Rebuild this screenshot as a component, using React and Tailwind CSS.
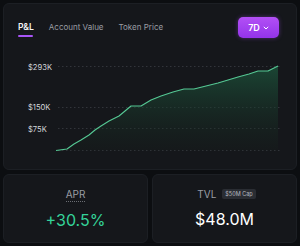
import React from "react";

const pts = [
  [55, 152.5], [66, 151], [73, 146], [80, 142], [88, 137], [94, 132], [100, 128], [108, 123], [118, 118], [124, 113], [130, 108], [140, 108], [150, 102], [160, 98], [172, 94], [183, 91], [193, 91], [205, 88], [217, 85], [227, 82], [237, 79], [248, 76], [257, 73], [267, 73], [277, 68],
];

function Chart() {
  const line = pts.map((p, i) => `${i ? "L" : "M"}${p[0] - 12},${p[1] - 55}`).join(" ");
  const area = `${line} L${277 - 12},${152.5 - 55} L${55 - 12},${152.5 - 55} Z`;
  return (
    <svg width="272" height="104" className="block">
      <defs>
        <linearGradient id="g" x1="0" y1="0" x2="0" y2="1">
          <stop offset="0" stopColor="#1d5a3f" stopOpacity="0.7" />
          <stop offset="1" stopColor="#16201b" stopOpacity="0.25" />
        </linearGradient>
      </defs>
      {[68.5, 109.5, 130.5, 152.5].map((y) => (
        <line key={y} x1={57 - 12} x2={279 - 12} y1={y - 55} y2={y - 55} stroke="#32353b" strokeWidth="1" strokeDasharray="1.5 2.5" />
      ))}
      <path d={area} fill="url(#g)" />
      <path d={line} fill="none" stroke="#55c894" strokeWidth="1.1" strokeLinejoin="round" />
      <text x="15" y="16.5" fill="#d4d6da" fontSize="7.6" fontFamily="Inter, sans-serif">$293K</text>
      <text x="15" y="57" fill="#d4d6da" fontSize="7.6" fontFamily="Inter, sans-serif">$150K</text>
      <text x="15" y="79" fill="#d4d6da" fontSize="7.6" fontFamily="Inter, sans-serif">$75K</text>
    </svg>
  );
}

export default function App() {
  return (
    <div className="w-[300px] h-[246px] bg-[#0c0e11] p-[3px] flex flex-col gap-[4px] overflow-hidden" style={{ fontFamily: "Inter, 'Noto Sans', sans-serif" }}>
      <div className="h-[167px] shrink-0 rounded-[6px] bg-[#15171b] border border-[#1c1f24] flex flex-col">
        <div className="flex items-start justify-between pl-[14px] pr-[17px] pt-[13px]">
          <div className="flex items-start gap-[15px] text-[8px] pt-[4px]">
            <div className="flex flex-col items-center">
              <span className="text-[#f3f4f6] font-semibold leading-[12px] text-[8.6px]">P&amp;L</span>
              <div className="mt-[2px] h-[2px] w-[15px] rounded bg-[#a855f7]" />
            </div>
            <span className="text-[#9a9da3] leading-[12px]">Account Value</span>
            <span className="text-[#9a9da3] leading-[12px]">Token Price</span>
          </div>
          <div className="h-[21px] w-[41px] rounded-[5px] bg-gradient-to-b from-[#b34ff5] to-[#9333ea] flex items-center justify-center gap-[3px] text-white text-[9px] font-semibold shadow-[0_0_4px_rgba(168,85,247,0.4)]">
            7D
            <svg width="6" height="4" viewBox="0 0 6 4"><path d="M0.8 0.8 L3 3 L5.2 0.8" fill="none" stroke="white" strokeWidth="1" /></svg>
          </div>
        </div>
        <div className="pl-[9px] mt-[15px]">
          <Chart />
        </div>
      </div>
      <div className="flex gap-[4px] flex-1">
        <div className="flex-1 rounded-[6px] bg-[#15171b] border border-[#1c1f24] flex flex-col items-center pt-[13px]">
          <span className="text-[10px] text-[#9a9da3] leading-[13px] border-b border-dotted border-[#6b6e74]">APR</span>
          <span className="mt-[8px] text-[16px] leading-[20px] text-[#34d399]">+30.5%</span>
        </div>
        <div className="flex-1 rounded-[6px] bg-[#15171b] border border-[#1c1f24] flex flex-col items-center pt-[12px]">
          <div className="flex items-center gap-[6px] ml-[4px]">
            <span className="text-[10px] text-[#9a9da3] leading-[14px]">TVL</span>
            <span className="text-[5.5px] text-[#b8bbc0] bg-[#2a2d33] rounded-[2px] px-[3px] py-[2px] leading-[6px]">$50M Cap</span>
          </div>
          <span className="mt-[8px] text-[16px] leading-[20px] text-white">$48.0M</span>
        </div>
      </div>
    </div>
  );
}
